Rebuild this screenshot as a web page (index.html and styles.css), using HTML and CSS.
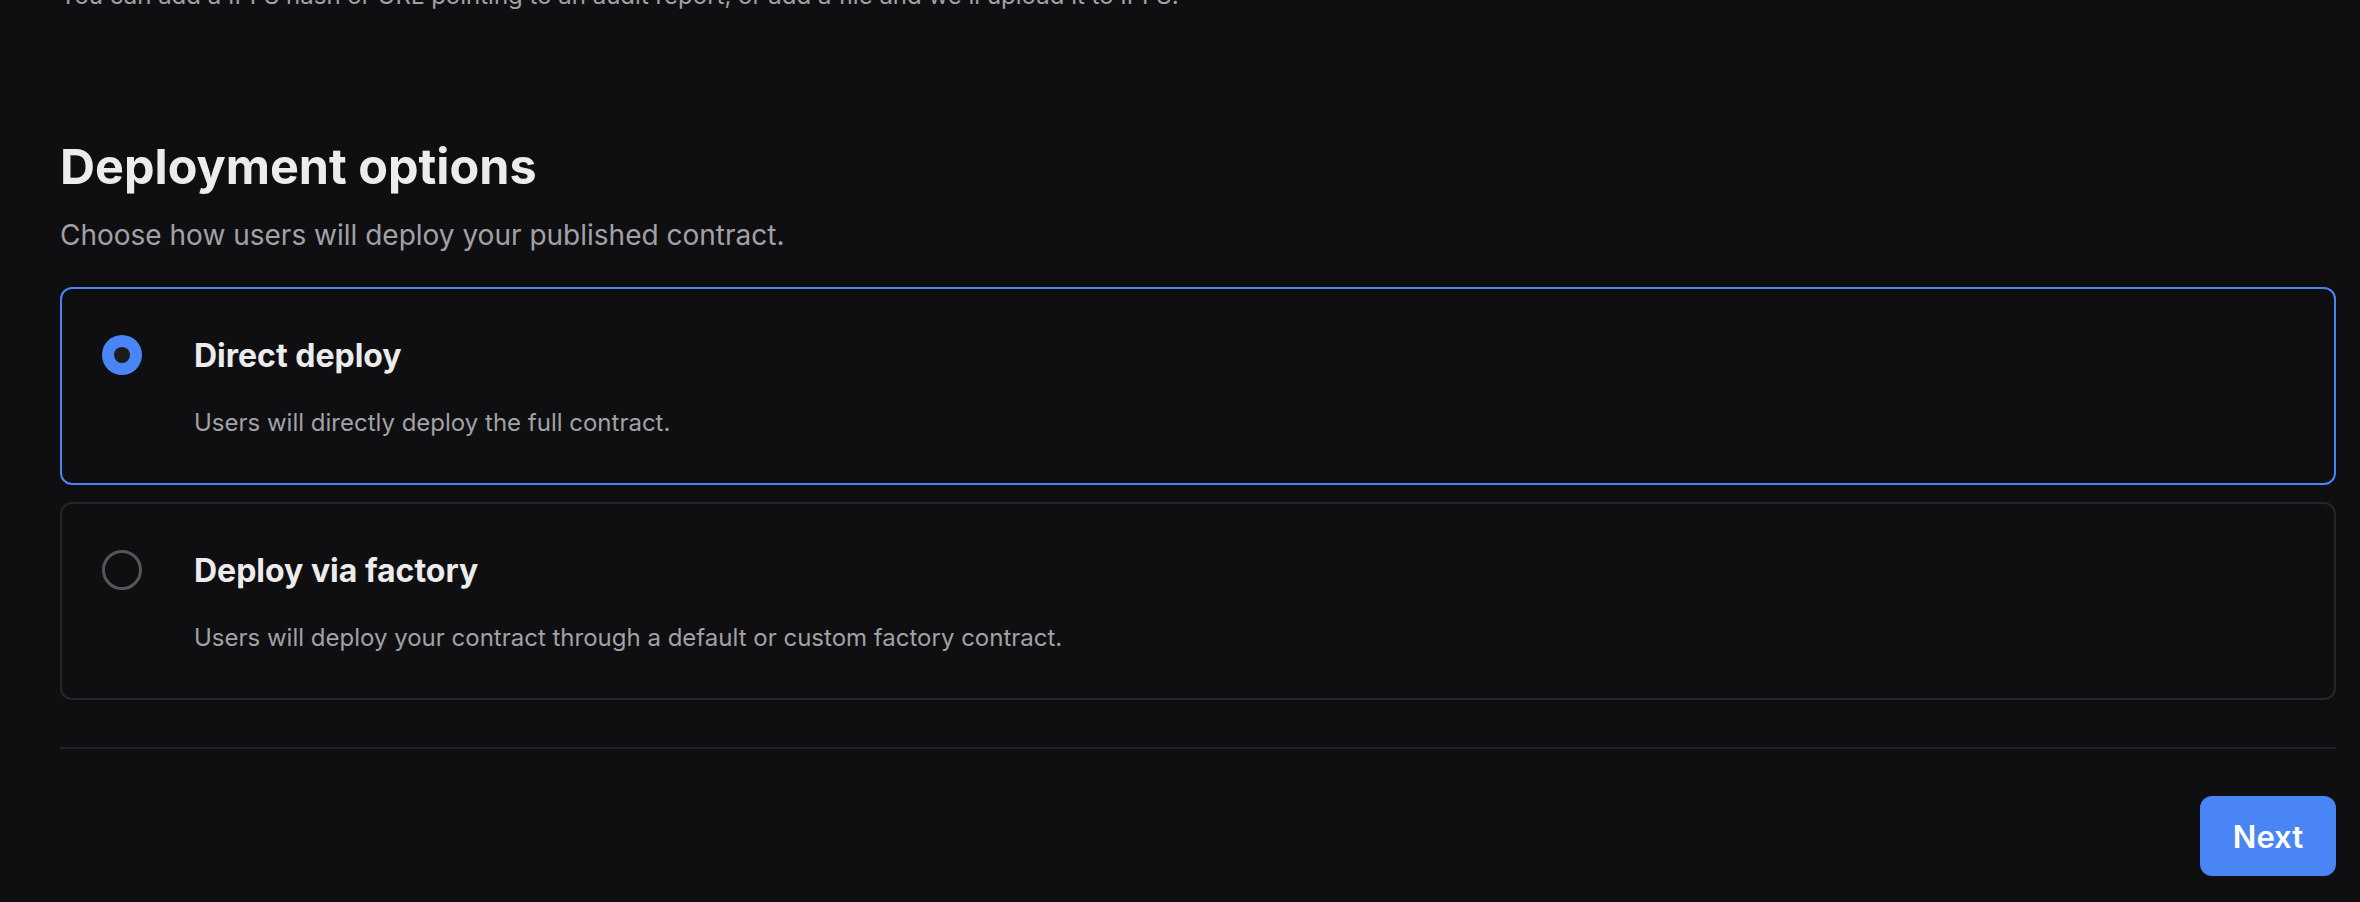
FILE: index.html
```html
<!DOCTYPE html>
<html lang="en">
<head>
<meta charset="utf-8">
<title>Deployment options</title>
<link rel="stylesheet" href="styles.css">
</head>
<body>
<main class="page">
  <p class="prev-hint">You can add a IPFS hash or URL pointing to an audit report, or add a file and we'll upload it to IPFS.</p>

  <section class="section">
    <h2 class="section-title">Deployment options</h2>
    <p class="section-sub">Choose how users will deploy your published contract.</p>

    <div class="options">
      <label class="option option--active">
        <span class="radio radio--checked"><span class="radio-dot"></span></span>
        <span class="option-body">
          <span class="option-title">Direct deploy</span>
          <span class="option-desc">Users will directly deploy the full contract.</span>
        </span>
      </label>
      <label class="option">
        <span class="radio"></span>
        <span class="option-body">
          <span class="option-title">Deploy via factory</span>
          <span class="option-desc">Users will deploy your contract through a default or custom factory contract.</span>
        </span>
      </label>
    </div>
  </section>

  <hr class="divider">

  <div class="actions">
    <button class="btn-primary" type="button">Next</button>
  </div>
</main>
</body>
</html>
```

FILE: styles.css
```css
* { box-sizing: border-box; }

html, body {
  margin: 0;
  padding: 0;
  background: #0f0f11;
  height: 100%;
  overflow: hidden;
}

body {
  font-family: Inter, "Noto Sans", "Liberation Sans", sans-serif;
  color: #ececed;
}

.page {
  padding: 0 24px 0 60px;
  display: flex;
  flex-direction: column;
}

.prev-hint {
  margin: -22px 0 0;
  font-size: 24px;
  line-height: 36px;
  color: #a1a1a6;
}

.section {
  margin-top: 124px;
  display: flex;
  flex-direction: column;
}

.section-title {
  margin: 0;
  font-size: 48.5px;
  line-height: 58px;
  font-weight: 700;
  color: #ececed;
}

.section-sub {
  margin: 19px 0 0;
  font-size: 28px;
  line-height: 40px;
  color: #a1a1a6;
}

.options {
  margin-top: 32px;
  display: flex;
  flex-direction: column;
  gap: 17px;
}

.option {
  display: flex;
  align-items: flex-start;
  gap: 52px;
  padding: 44px 40px 43px;
  border: 2px solid #26262b;
  border-radius: 12px;
  cursor: pointer;
}

.option--active {
  border-color: #4a85f6;
}

.radio {
  flex: none;
  width: 40px;
  height: 40px;
  margin-top: 2px;
  border-radius: 50%;
  border: 3px solid #55555a;
  display: flex;
  align-items: center;
  justify-content: center;
}

.radio--checked {
  border: none;
  background: #4a85f6;
}

.radio-dot {
  width: 16px;
  height: 16px;
  border-radius: 50%;
  background: #1c1c1f;
}

.option-body {
  display: flex;
  flex-direction: column;
  gap: 28px;
}

.option-title {
  font-size: 32px;
  line-height: 45px;
  font-weight: 700;
  color: #ececed;
}

.option-desc {
  font-size: 24px;
  line-height: 34px;
  color: #a1a1a6;
}

.divider {
  margin: 47px 0 0;
  border: none;
  border-top: 2px solid #222226;
}

.actions {
  margin-top: 47px;
  display: flex;
  justify-content: flex-end;
}

.btn-primary {
  width: 136px;
  height: 80px;
  border: none;
  border-radius: 12px;
  background: #4a85f6;
  color: #ffffff;
  font-family: Inter, "Noto Sans", "Liberation Sans", sans-serif;
  font-size: 31px;
  font-weight: 600;
  cursor: pointer;
}
```
